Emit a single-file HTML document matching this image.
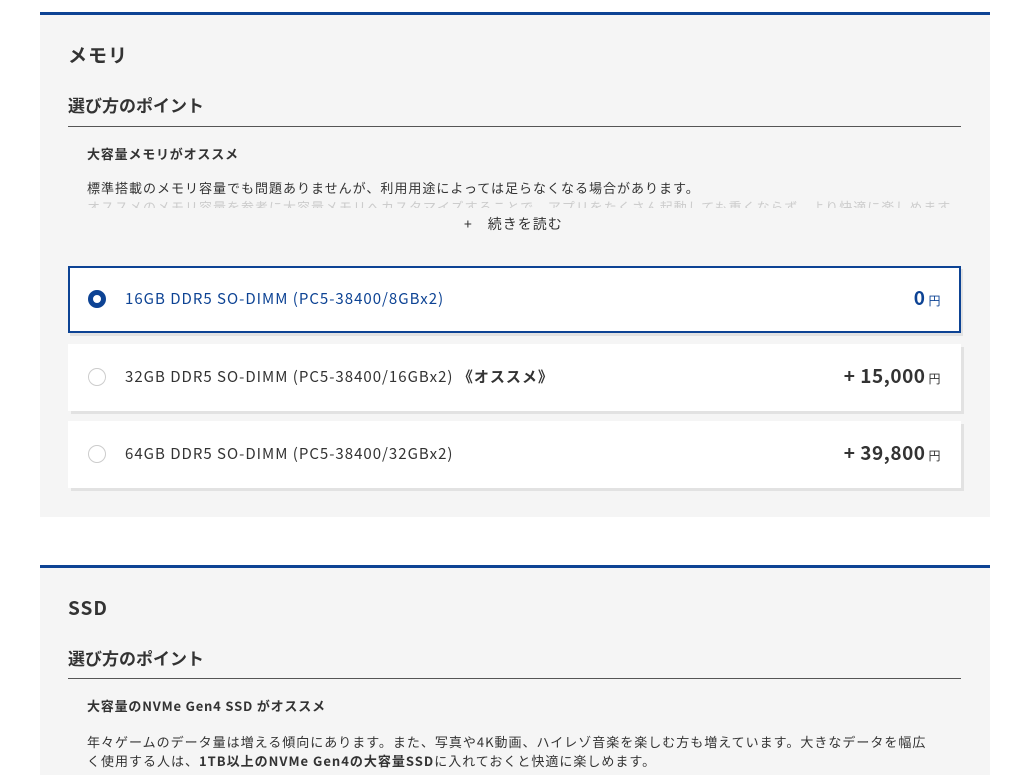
<!DOCTYPE html>
<html><head><meta charset="utf-8"><style>
*{margin:0;padding:0;box-sizing:border-box}
body{width:1024px;height:768px;overflow:hidden;background:#fff;font-family:"Noto Sans CJK JP","Liberation Sans",sans-serif;color:#333;position:relative}
.sec{position:absolute;left:40px;width:950px;background:#f5f5f5;border-top:3px solid #0d4394}
.a{position:absolute;white-space:nowrap}
.h1{font-size:19px;font-weight:bold;left:28px;letter-spacing:1px}
.h2{font-size:17px;font-weight:bold;left:28px}
.line{position:absolute;left:28px;width:893px;height:1px;background:#555}
.h3{font-size:13px;font-weight:bold;left:47px;letter-spacing:.8px}
.p{font-size:13px;left:47px;line-height:19px;letter-spacing:1px}
.card{position:absolute;left:28px;width:893px;height:67px;background:#fff;box-shadow:3px 3px 0 #e2e2e2}
.card .r{position:absolute;left:20px;top:24px;width:18px;height:18px;border-radius:50%;border:1px solid #ccc;background:#fff}
.card .t{position:absolute;left:57px;top:22px;font-size:15px;letter-spacing:1px;white-space:nowrap}
.card .pr{position:absolute;right:20px;top:18px;font-size:19px;font-weight:bold;white-space:nowrap;letter-spacing:.5px}
.card .pr small{font-size:12px;font-weight:normal;margin-left:3px}
</style></head><body>
<div class="sec" style="top:12px;height:505px">
 <div class="a h1" style="top:26px">メモリ</div>
 <div class="a h2" style="top:77px">選び方のポイント</div>
 <div class="line" style="top:111px"></div>
 <div class="a h3" style="top:129px">大容量メモリがオススメ</div>
 <div class="a p" style="top:163px;height:30px;overflow:hidden">標準搭載のメモリ容量でも問題ありませんが、利用用途によっては足らなくなる場合があります。<br><span style="color:#ccc">オススメのメモリ容量を参考に大容量メモリへカスタマイズすることで、アプリをたくさん起動しても重くならず、より快適に楽しめます。</span></div>
 <div class="a" style="top:199px;left:424px;font-size:14px;letter-spacing:1px">+　続きを読む</div>
 <div class="card" style="top:251px;border:2px solid #0d4394;box-shadow:2px 3px 0 #e2e2e2">
  <div class="r" style="left:18px;top:22px;border:5px solid #0d4394"></div>
  <div class="t" style="left:55px;top:20px;color:#0d4394">16GB DDR5 SO-DIMM (PC5-38400/8GBx2)</div>
  <div class="pr" style="right:18px;top:16px;color:#0d4394">0<small>円</small></div>
 </div>
 <div class="card" style="top:329px">
  <div class="r"></div>
  <div class="t">32GB DDR5 SO-DIMM (PC5-38400/16GBx2) <b>《オススメ》</b></div>
  <div class="pr">+ 15,000<small>円</small></div>
 </div>
 <div class="card" style="top:406px">
  <div class="r"></div>
  <div class="t">64GB DDR5 SO-DIMM (PC5-38400/32GBx2)</div>
  <div class="pr">+ 39,800<small>円</small></div>
 </div>
</div>
<div class="sec" style="top:565px;height:210px">
 <div class="a h1" style="top:26px">SSD</div>
 <div class="a h2" style="top:77px">選び方のポイント</div>
 <div class="line" style="top:110px"></div>
 <div class="a h3" style="top:128px">大容量のNVMe Gen4 SSD がオススメ</div>
 <div class="a p" style="top:164px">年々ゲームのデータ量は増える傾向にあります。また、写真や4K動画、ハイレゾ音楽を楽しむ方も増えています。大きなデータを幅広<br>く使用する人は、<b>1TB以上のNVMe Gen4の大容量SSD</b>に入れておくと快適に楽しめます。</div>
</div>
</body></html>
